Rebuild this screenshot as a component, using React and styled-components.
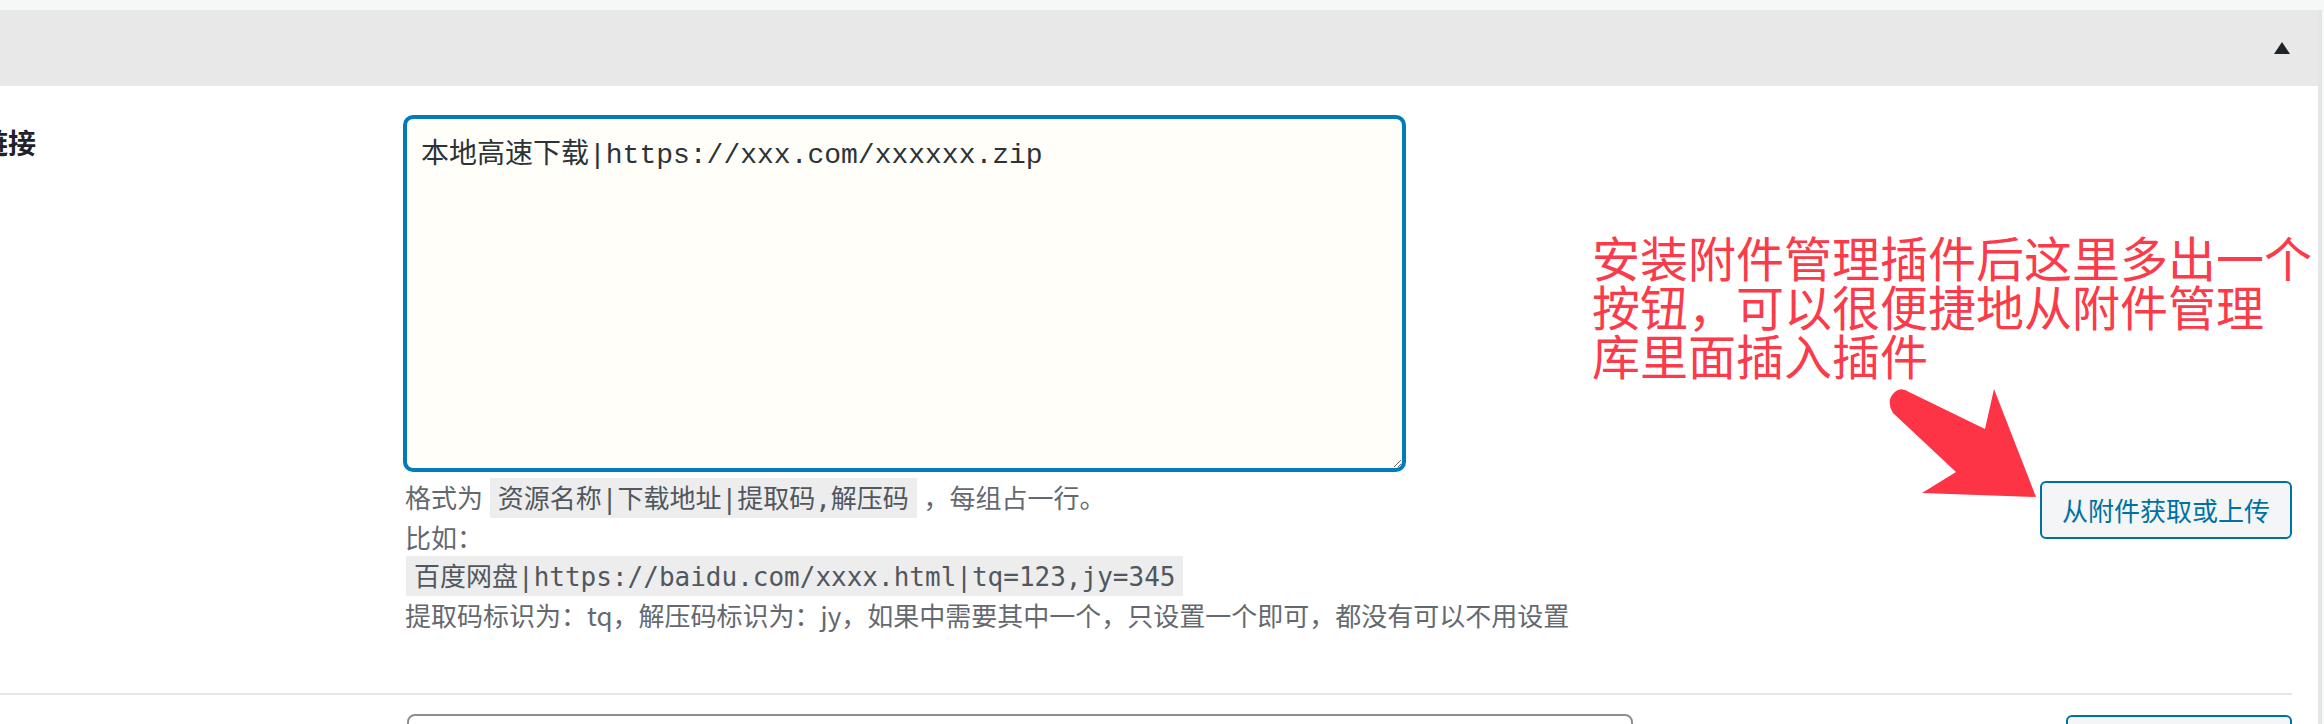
import styled, { createGlobalStyle } from 'styled-components';

const GlobalStyle = createGlobalStyle`
  html, body {
    margin: 0;
    padding: 0;
    overflow: hidden;
    background: #f6f7f7;
  }
  body {
    font-family: "Noto Sans CJK SC", "Noto Sans", sans-serif;
  }
`;

const Page = styled.div`
  position: relative;
  width: 2324px;
  height: 724px;
  padding-top: 10px;
  box-sizing: border-box;
`;

const Postbox = styled.div`
  width: 2322px;
  height: 714px;
  background: #fff;
  border-right: 4px solid #e4e5e7;
  box-sizing: border-box;
`;

const Header = styled.div`
  height: 76px;
  background: #e8e8e8;
  display: flex;
  align-items: center;
  justify-content: flex-end;
  padding-right: 28px;
`;

const Toggle = styled.svg`
  width: 16px;
  height: 12px;
  fill: #1d2327;
`;

const Body = styled.div`
  padding-right: 26px;
`;

const FieldRow = styled.div`
  display: grid;
  grid-template-columns: 405px 1fr;
  padding: ${(p) => p.$top}px 0 ${(p) => p.$bottom}px;
  border-bottom: ${(p) => (p.$divider ? '2px solid #e6e6e6' : 'none')};
`;

const Label = styled.div`
  margin: 7px 0 0 -76px;
  font-size: 28px;
  line-height: 36px;
  font-weight: 700;
  color: #1d2327;
  white-space: nowrap;
`;

const Field = styled.div`
  display: flex;
  flex-direction: column;
`;

const Links = styled.textarea`
  width: 999px;
  height: 353px;
  box-sizing: border-box;
  padding: 17px 14px;
  border: 2px solid #007cba;
  box-shadow: 0 0 0 2px #007cba;
  border-radius: 8px;
  background: #fffef8;
  color: #2c3338;
  font-family: "Liberation Mono", "Noto Sans CJK SC", monospace;
  font-size: 28px;
  line-height: 40px;
  outline: none;
  margin: 0;
`;

const Footer = styled.div`
  display: flex;
  justify-content: space-between;
  align-items: flex-start;
  margin-top: 8px;
`;

const Description = styled.p`
  margin: 0;
  font-size: 26px;
  line-height: 38px;
  color: #646970;
`;

const Code = styled.code`
  font-family: "DejaVu Sans Mono", "Noto Sans CJK SC", monospace;
  font-size: 26px;
  background: rgba(0, 0, 0, 0.07);
  padding: 6px 8px 4px;
  margin: 0 1px;
  color: #50575e;
`;

const MediaButton = styled.button`
  height: 58px;
  margin-top: ${(p) => p.$offset}px;
  padding: 0 20px;
  box-sizing: border-box;
  border: 2px solid #0071a1;
  border-radius: 6px;
  background: #f3f5f6;
  color: #0071a1;
  font-family: "Noto Sans CJK SC", sans-serif;
  font-size: 26px;
  line-height: 1;
  white-space: nowrap;
  cursor: pointer;
`;

const InlineField = styled.div`
  display: flex;
  justify-content: space-between;
  align-items: flex-start;
`;

const Notes = styled.textarea`
  width: 1226px;
  height: 200px;
  margin: 0 0 0 2px;
  box-sizing: border-box;
  border: 2px solid #8c8f94;
  border-radius: 8px;
  background: #fff;
  font-size: 28px;
  outline: none;
`;

const Annotation = styled.div`
  position: absolute;
  left: 1592px;
  top: 232px;
  font-family: "Noto Sans CJK SC", sans-serif;
  font-size: 48px;
  line-height: 49px;
  color: #fb3a4a;
  white-space: nowrap;
`;

const Arrow = styled.svg`
  position: absolute;
  left: 1880px;
  top: 380px;
  width: 165px;
  height: 125px;
  fill: #fd3445;
`;

export default function App() {
    return (
        <>
            <GlobalStyle />
            <Page>
                <Postbox>
                    <Header>
                        <Toggle viewBox="0 0 16 12">
                            <polygon points="0,12 16,12 8,0" />
                        </Toggle>
                    </Header>
                    <Body>
                        <FieldRow $top={31} $bottom={59} $divider>
                            <Label>下载链接</Label>
                            <Field>
                                <Links defaultValue="本地高速下载|https://xxx.com/xxxxxx.zip" />
                                <Footer>
                                    <Description>
                                        格式为 <Code>资源名称|下载地址|提取码,解压码</Code> ，每组占一行。<br />
                                        比如：<br />
                                        <Code>百度网盘|https://baidu.com/xxxx.html|tq=123,jy=345</Code><br />
                                        提取码标识为：tq，解压码标识为：jy，如果中需要其中一个，只设置一个即可，都没有可以不用设置
                                    </Description>
                                    <MediaButton type="button" $offset={3}>从附件获取或上传</MediaButton>
                                </Footer>
                            </Field>
                        </FieldRow>
                        <FieldRow $top={19} $bottom={0}>
                            <div />
                            <InlineField>
                                <Notes />
                                <MediaButton type="button" $offset={1}>选择或上传图片</MediaButton>
                            </InlineField>
                        </FieldRow>
                    </Body>
                </Postbox>
                <Annotation>
                    安装附件管理插件后这里多出一个<br />
                    按钮，可以很便捷地从附件管理<br />
                    库里面插入插件
                </Annotation>
                <Arrow viewBox="1880 380 165 125">
                    <path d="M1896,391 Q1902,387 1909,392 L1985,429 L1994,389 L2036,497 L1922,493 L1956,472 L1893,413 Q1885,400 1896,391 Z" />
                </Arrow>
            </Page>
        </>
    );
}
